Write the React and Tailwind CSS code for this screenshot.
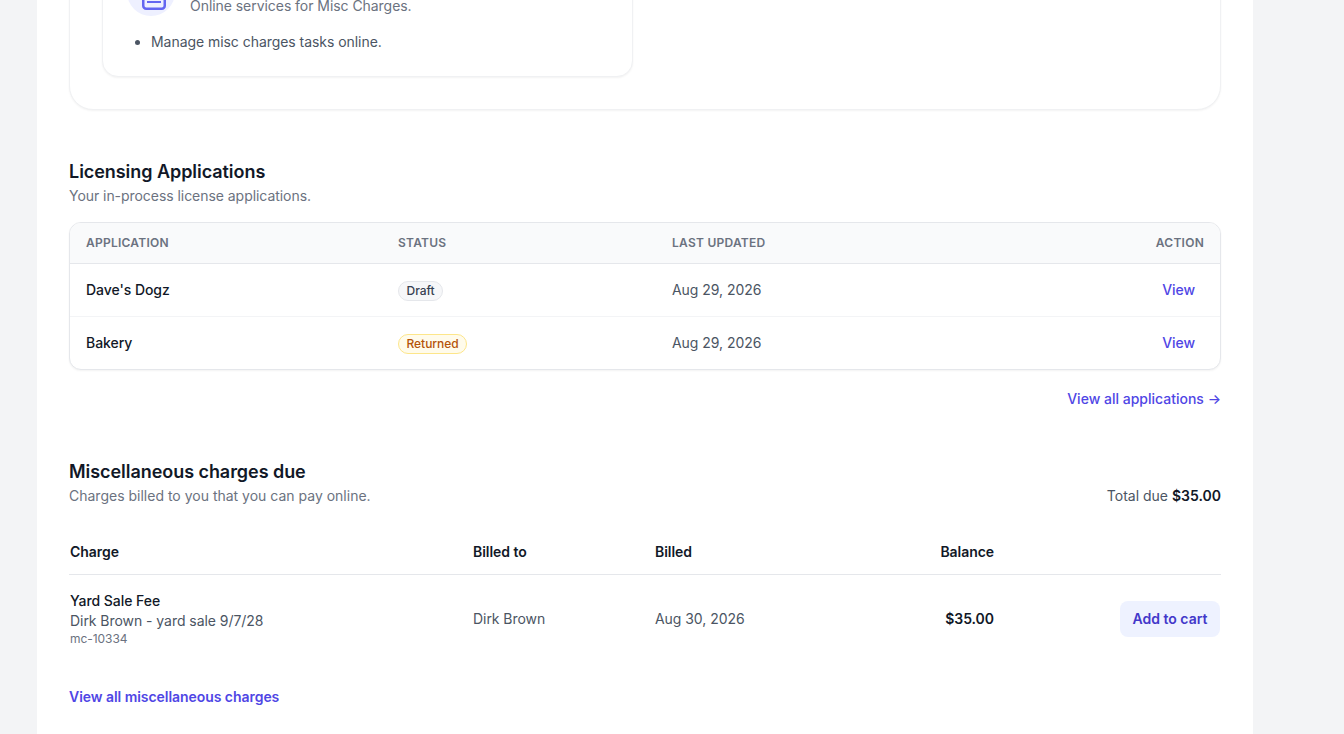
const font = { fontFamily: 'Inter, sans-serif' };

const applications = [
  { name: "Dave's Dogz", status: 'Draft', updated: 'Aug 29, 2026' },
  { name: 'Bakery', status: 'Returned', updated: 'Aug 29, 2026' },
];

function StatusBadge({ status }) {
  if (status === 'Returned') {
    return (
      <span className="inline-flex h-[20px] items-center rounded-full border border-[#fde68a] bg-[#fffbeb] px-[7.5px] text-xs font-medium tracking-[-0.03px] text-[#b45309]">
        {status}
      </span>
    );
  }
  return (
    <span className="inline-flex h-[20px] items-center rounded-full border border-[#e5e7eb] bg-[#f6f7f9] px-[7.5px] text-xs font-medium tracking-[-0.03px] text-[#374151]">
      {status}
    </span>
  );
}

function ServicesCard() {
  return (
    <div className="rounded-3xl border border-[#f0f1f3] bg-white p-8 shadow-xs">
      <div className="w-[531px] rounded-2xl border border-[#f0f1f3] bg-white p-6 shadow-xs">
        <div className="flex gap-[15px]">
          <div className="flex h-12 w-12 items-center justify-center rounded-full bg-[#eef0ff]">
            <svg className="ml-[5px]" width="24" height="36" viewBox="0 0 24 36" fill="none" stroke="#6366f1" strokeWidth="2.5" strokeLinejoin="round">
              <rect x="1.25" y="1.25" width="21.5" height="33.5" rx="3" />
              <path d="M5 28h14" strokeWidth="2" />
            </svg>
          </div>
          <div className="pt-1">
            <p className="text-base font-semibold leading-6 text-[#111827]">Misc Charges</p>
            <p className="text-sm leading-5 text-[#6b7280]">Online services for Misc Charges.</p>
          </div>
        </div>
        <ul className="mt-4 list-disc pl-[24px] text-sm leading-5 text-[#4b5563]">
          <li>Manage misc charges tasks online.</li>
        </ul>
      </div>
    </div>
  );
}

function ApplicationsTable() {
  return (
    <div className="mt-4 overflow-hidden rounded-xl border border-[#e5e7eb] bg-white shadow-xs">
      <div className="flex h-[41px] items-center border-b border-[#e5e7eb] bg-[#f9fafb] px-4 text-xs font-semibold tracking-[0.25px] text-[#6b7280]">
        <div className="w-[312px]">APPLICATION</div>
        <div className="w-[274px]">STATUS</div>
        <div className="flex-1">LAST UPDATED</div>
        <div>ACTION</div>
      </div>
      {applications.map((app, i) => (
        <div
          key={app.name}
          className={`flex items-center pl-4 pr-[25px] text-sm ${i === 0 ? 'h-[53px] border-b border-[#f3f4f6]' : 'h-[52px]'}`}
        >
          <div className="w-[312px] font-medium text-[#111827]">{app.name}</div>
          <div className="w-[274px]">
            <StatusBadge status={app.status} />
          </div>
          <div className="flex-1 text-[#4b5563]">{app.updated}</div>
          <a className="font-medium text-[#4f46e5]" href="#">View</a>
        </div>
      ))}
    </div>
  );
}

function ChargesTable() {
  return (
    <div className="mt-[35px]">
      <div className="flex h-[34px] items-start border-b border-[#e5e7eb] px-px text-sm font-semibold leading-5 text-[#111827]">
        <div className="w-[403px] pt-px">Charge</div>
        <div className="w-[182px] pt-px">Billed to</div>
        <div className="w-[200px] pt-px">Billed</div>
        <div className="w-[139px] pt-px text-right">Balance</div>
      </div>
      <div className="flex items-center px-px pt-4 text-sm">
        <div className="w-[403px]">
          <p className="font-medium leading-5 text-[#111827]">Yard Sale Fee</p>
          <p className="leading-5 text-[#4b5563]">Dirk Brown - yard sale 9/7/28</p>
          <p className="text-xs leading-4 text-[#6b7280]">mc-10334</p>
        </div>
        <div className="w-[182px] text-[#4b5563]">Dirk Brown</div>
        <div className="w-[200px] text-[#4b5563]">Aug 30, 2026</div>
        <div className="w-[139px] text-right font-semibold text-[#111827]">$35.00</div>
        <div className="flex flex-1 justify-end">
          <button className="h-9 w-[100px] rounded-lg bg-[#eef2ff] text-sm font-semibold tracking-normal text-[#4338ca]">Add to cart</button>
        </div>
      </div>
    </div>
  );
}

export default function App() {
  return (
    <div className="h-[734px] overflow-hidden bg-[#f3f4f6] tracking-[-0.05px]" style={font}>
      <main className="ml-[37px] w-[1216px] bg-white px-8 pb-8">
        <div className="-mt-[90px]">
          <ServicesCard />
        </div>

        <section className="mt-[49px]">
          <h2 className="pb-[2px] text-lg leading-[25px] font-semibold text-[#111827]">Licensing Applications</h2>
          <p className="text-sm leading-5 text-[#6b7280]">Your in-process license applications.</p>
          <ApplicationsTable />
          <div className="mt-[19px] flex justify-end">
            <a className="text-sm font-medium tracking-normal text-[#4f46e5]" href="#">
              View all applications →
            </a>
          </div>
        </section>

        <section className="mt-[50px]">
          <div className="flex items-end justify-between">
            <div>
              <h2 className="pb-[2px] text-lg leading-[25px] font-semibold text-[#111827]">Miscellaneous charges due</h2>
              <p className="text-sm leading-5 tracking-normal text-[#6b7280]">Charges billed to you that you can pay online.</p>
            </div>
            <p className="text-sm leading-5 tracking-normal text-[#4b5563]">
              Total due <span className="font-semibold text-[#111827]">$35.00</span>
            </p>
          </div>
          <ChargesTable />
          <a className="mt-10 block text-sm font-semibold text-[#4f46e5]" href="#">
            View all miscellaneous charges
          </a>
        </section>
      </main>
    </div>
  );
}
